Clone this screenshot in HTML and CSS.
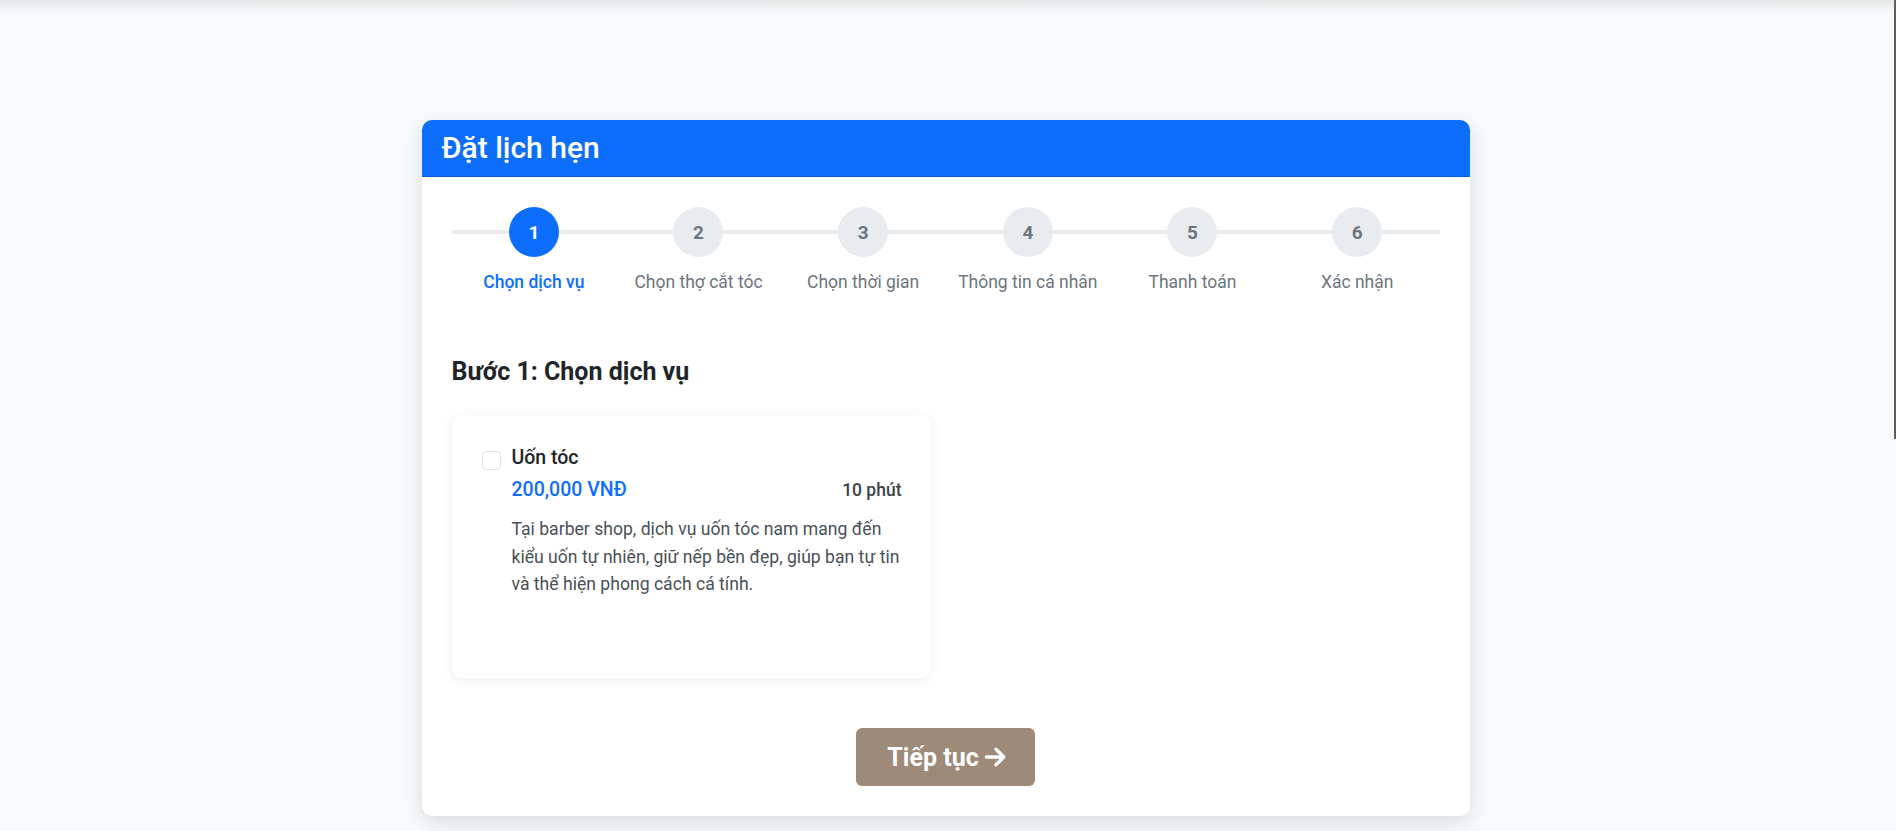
FILE: index.html
```html
<!DOCTYPE html>
<html lang="vi">
<head>
<meta charset="utf-8">
<title>Đặt lịch hẹn</title>
<link rel="stylesheet" href="styles.css">
</head>
<body>
<div class="scroll-thumb"></div>
<main class="page">
  <section class="booking">
    <header class="booking-header">
      <h1 class="booking-title">Đặt lịch hẹn</h1>
    </header>
    <div class="booking-body">
      <ol class="steps">
        <li class="step active"><span class="step-num">1</span><span class="step-label">Chọn dịch vụ</span></li>
        <li class="step"><span class="step-num">2</span><span class="step-label">Chọn thợ cắt tóc</span></li>
        <li class="step"><span class="step-num">3</span><span class="step-label">Chọn thời gian</span></li>
        <li class="step"><span class="step-num">4</span><span class="step-label">Thông tin cá nhân</span></li>
        <li class="step"><span class="step-num">5</span><span class="step-label">Thanh toán</span></li>
        <li class="step"><span class="step-num">6</span><span class="step-label">Xác nhận</span></li>
      </ol>

      <h2 class="step-heading">Bước 1: Chọn dịch vụ</h2>

      <div class="services">
        <label class="service-card">
          <span class="checkbox"></span>
          <span class="service-info">
            <span class="service-name">Uốn tóc</span>
            <span class="service-meta">
              <span class="service-price">200,000 VNĐ</span>
              <span class="service-time">10 phút</span>
            </span>
            <span class="service-desc">Tại barber shop, dịch vụ uốn tóc nam mang đến kiểu uốn tự nhiên, giữ nếp bền đẹp, giúp bạn tự tin và thể hiện phong cách cá tính.</span>
          </span>
        </label>
      </div>

      <div class="actions">
        <button class="btn-next" type="button">Tiếp tục
          <svg class="arrow" viewBox="0 0 20 20" width="24" height="24" aria-hidden="true"><path d="M2 10h14.5M10 3.5l6.5 6.5-6.5 6.5" fill="none" stroke="currentColor" stroke-width="2.8" stroke-linecap="round" stroke-linejoin="round"/></svg>
        </button>
      </div>
    </div>
  </section>
</main>
</body>
</html>
```

FILE: styles.css
```css
* { box-sizing: border-box; }

html, body {
  margin: 0;
  padding: 0;
}

body {
  font-family: Roboto, "Liberation Sans", Arial, sans-serif;
  color: #212529;
  background: linear-gradient(rgba(0,0,0,0.07), rgba(0,0,0,0) 14px), #f8f9fa;
  min-height: 831px;
  overflow: hidden;
}

.scroll-thumb {
  position: fixed;
  top: 0;
  right: 0;
  width: 2px;
  height: 439px;
  background: #5f5f5f;
}

.page {
  padding: 120px 5px 0 0;
}

.booking {
  width: 1048px;
  margin: 0 auto;
  background: #fff;
  border-radius: 10px;
  box-shadow: 0 6px 20px rgba(0, 0, 0, 0.12);
  overflow: hidden;
}

.booking-header {
  background: #0d6efd;
  border-bottom: 1px solid #0b5ed7;
  padding: 0 20px;
  height: 57px;
  display: flex;
  align-items: center;
}

.booking-title {
  margin: 0;
  color: #fff;
  font-size: 30px;
  font-weight: 500;
  line-height: 36px;
}

.booking-body {
  padding: 30px 30px 30px;
}

.steps {
  list-style: none;
  margin: 0;
  padding: 0;
  display: grid;
  grid-template-columns: repeat(6, 1fr);
  position: relative;
}

.steps::before {
  content: "";
  position: absolute;
  left: 0;
  right: 0;
  top: 23px;
  height: 4px;
  background: #e9ecef;
}

.step {
  display: flex;
  flex-direction: column;
  align-items: center;
  position: relative;
}

.step-num {
  width: 50px;
  height: 50px;
  border-radius: 50%;
  background: #e9ecef;
  color: #6c757d;
  font-weight: 700;
  font-size: 19px;
  display: flex;
  align-items: center;
  justify-content: center;
}

.step-label {
  margin-top: 13px;
  font-size: 17.5px;
  line-height: 24px;
  color: #6c757d;
}

.step.active .step-num {
  background: #0d6efd;
  color: #fff;
}

.step.active .step-label {
  color: #0d6efd;
  font-weight: 500;
}

.step-heading {
  margin: 63px 0 28px;
  font-size: 25px;
  font-weight: 700;
  line-height: 30px;
  color: #212529;
}

.services {
  display: grid;
  grid-template-columns: 1fr 1fr;
  gap: 30px;
}

.service-card {
  display: flex;
  gap: 11px;
  min-height: 263px;
  padding: 29px 29px 30px 30px;
  background: #fff;
  border-radius: 10px;
  box-shadow: 0 2px 12px rgba(0, 0, 0, 0.07);
  cursor: pointer;
}

.checkbox {
  flex: none;
  width: 19px;
  height: 19px;
  margin-top: 7px;
  border: 1px solid #dee2e6;
  border-radius: 4px;
  background: #fff;
}

.service-info {
  flex: 1;
  display: flex;
  flex-direction: column;
}

.service-name {
  font-size: 19.5px;
  font-weight: 500;
  line-height: 27px;
  color: #212529;
}

.service-meta {
  display: flex;
  justify-content: space-between;
  align-items: center;
  margin-top: 5px;
}

.service-price {
  font-size: 19.5px;
  font-weight: 500;
  line-height: 27px;
  color: #0d6efd;
}

.service-time {
  font-size: 17.5px;
  font-weight: 500;
  color: #3d4349;
}

.service-desc {
  margin-top: 13px;
  font-size: 17.6px;
  line-height: 27.5px;
  color: #495057;
}

.actions {
  display: flex;
  justify-content: center;
  margin-top: 50px;
}

.btn-next {
  display: inline-flex;
  align-items: center;
  gap: 5px;
  height: 58px;
  padding: 0 27px 0 31px;
  border: 0;
  border-radius: 6px;
  background: #9e8a78;
  color: #fff;
  font-family: inherit;
  font-size: 25px;
  font-weight: 700;
  cursor: pointer;
}

.arrow {
  display: block;
}
```
